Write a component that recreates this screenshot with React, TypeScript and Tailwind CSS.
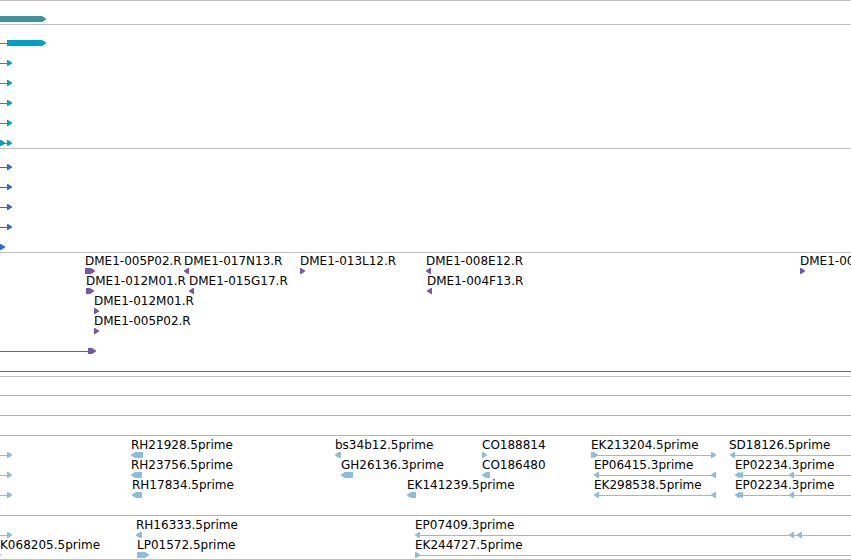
import React from 'react';

type Dir = 'left' | 'right';

interface Glyph {
  x: number;
  w: number;
  dir: Dir;
}

interface Lane {
  labels?: { x: number; text: string }[];
  // [start, end], without an end the line runs off the right side
  lines?: [number, number?][];
  glyphs?: Glyph[];
}

interface Track {
  name: string;
  color: string;
  lanes: Lane[];
}

const right = (x: number, w = 5): Glyph => ({ x, w, dir: 'right' });
const left = (x: number, w = 5): Glyph => ({ x, w, dir: 'left' });

const readEnd: Lane = { lines: [[0, 8]], glyphs: [right(7)] };
const fullLine: Lane = { lines: [[0]] };

const tracks: Track[] = [
  {
    name: 'Transcript',
    color: 'text-[#3f929a]',
    lanes: [{ glyphs: [right(0, 46)] }],
  },
  {
    name: 'cDNA',
    color: 'text-[#00a0c4]',
    lanes: [
      { lines: [[0, 8]], glyphs: [right(7, 39)] },
      readEnd,
      readEnd,
      readEnd,
      readEnd,
      { lines: [[0, 8]], glyphs: [right(0), right(7)] },
    ],
  },
  {
    name: 'mRNA',
    color: 'text-[#3369cc]',
    lanes: [readEnd, readEnd, readEnd, readEnd, { glyphs: [right(0)] }],
  },
  {
    name: 'Clones',
    color: 'text-[#7755aa]',
    lanes: [
      {
        labels: [
          { x: 85, text: 'DME1-005P02.R' },
          { x: 184, text: 'DME1-017N13.R' },
          { x: 300, text: 'DME1-013L12.R' },
          { x: 426, text: 'DME1-008E12.R' },
          { x: 800, text: 'DME1-00' },
        ],
        glyphs: [right(85, 10), left(184), right(300), left(426), right(800)],
      },
      {
        labels: [
          { x: 86, text: 'DME1-012M01.R' },
          { x: 189, text: 'DME1-015G17.R' },
          { x: 427, text: 'DME1-004F13.R' },
        ],
        glyphs: [right(86, 8), left(189), left(427)],
      },
      { labels: [{ x: 94, text: 'DME1-012M01.R' }], glyphs: [right(94)] },
      { labels: [{ x: 94, text: 'DME1-005P02.R' }], glyphs: [right(94)] },
      { lines: [[0, 89]], glyphs: [right(88, 8)] },
      fullLine,
    ],
  },
  {
    name: 'EST',
    color: 'text-[#8bbddc]',
    lanes: [
      fullLine,
      fullLine,
      fullLine,
      {
        labels: [
          { x: 131, text: 'RH21928.5prime' },
          { x: 335, text: 'bs34b12.5prime' },
          { x: 482, text: 'CO188814' },
          { x: 591, text: 'EK213204.5prime' },
          { x: 729, text: 'SD18126.5prime' },
        ],
        lines: [[0, 8], [592, 712], [732]],
        glyphs: [right(7), left(131, 12), left(335, 6), right(482), right(591), right(593), right(711), left(730)],
      },
      {
        labels: [
          { x: 131, text: 'RH23756.5prime' },
          { x: 341, text: 'GH26136.3prime' },
          { x: 482, text: 'CO186480' },
          { x: 594, text: 'EP06415.3prime' },
          { x: 735, text: 'EP02234.3prime' },
        ],
        lines: [[0, 8], [596, 714], [737]],
        glyphs: [right(7), left(131, 11), left(341, 12), left(482, 8), left(594), left(711), left(735), left(738), left(789)],
      },
      {
        labels: [
          { x: 132, text: 'RH17834.5prime' },
          { x: 407, text: 'EK141239.5prime' },
          { x: 594, text: 'EK298538.5prime' },
          { x: 735, text: 'EP02234.3prime' },
        ],
        lines: [[0, 8], [596, 714], [737]],
        glyphs: [right(7), left(132, 10), left(407, 9), left(594), left(711), left(735), left(738), left(789)],
      },
      fullLine,
      {
        labels: [
          { x: 136, text: 'RH16333.5prime' },
          { x: 415, text: 'EP07409.3prime' },
        ],
        lines: [[0, 8], [417]],
        glyphs: [right(7), left(136, 6), left(415), left(789), left(797)],
      },
      {
        labels: [
          { x: 0, text: 'K068205.5prime' },
          { x: 137, text: 'LP01572.5prime' },
          { x: 415, text: 'EK244727.5prime' },
        ],
        lines: [[417]],
        glyphs: [right(-4), right(137, 12), right(415)],
      },
    ],
  },
];

const FeatureGlyph: React.FC<Glyph> = ({ x, w, dir }) => {
  // the head takes the last 5 units, the rest is a plain bar
  const points =
    dir === 'right'
      ? `0,0 ${w - 4},0 ${w},2.5 ${w},3.5 ${w - 4},6 0,6`
      : `${w},0 4,0 0,2.5 0,3.5 4,6 ${w},6`;

  return (
    <svg
      className="absolute bottom-0 h-1.5"
      style={{ left: x, width: w }}
      viewBox={`0 0 ${w} 6`}
      fill="currentColor"
    >
      <polygon points={points} />
    </svg>
  );
};

const LaneRow: React.FC<{ lane: Lane }> = ({ lane }) => (
  <div className="relative h-5">
    {lane.lines?.map(([start, end]) => (
      <div
        key={start}
        className="absolute right-0 bottom-0.5 h-px bg-current"
        style={end === undefined ? { left: start } : { left: start, right: 'auto', width: end - start }}
      />
    ))}
    {lane.glyphs?.map((glyph) => (
      <FeatureGlyph key={glyph.x} {...glyph} />
    ))}
    {lane.labels?.map(({ x, text }) => (
      <span
        key={x}
        className="absolute top-0 whitespace-nowrap text-black"
        style={{ left: x }}
      >
        {text}
      </span>
    ))}
  </div>
);

const App: React.FC = () => {
  return (
    <main className="overflow-hidden border-b border-[#bfbfbf] bg-white font-['DejaVu_Sans',sans-serif] text-xs leading-[14px]">
      {tracks.map((track) => (
        <section
          key={track.name}
          aria-label={track.name}
          className={`border-t border-[#bfbfbf] pt-px pb-0.5 last:pb-px ${track.color}`}
        >
          {track.lanes.map((lane, i) => (
            <LaneRow key={i} lane={lane} />
          ))}
        </section>
      ))}
    </main>
  );
};

export default App;
